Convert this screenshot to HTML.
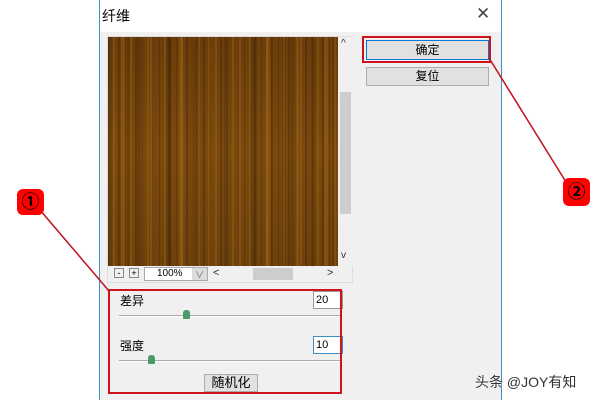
<!DOCTYPE html>
<html><head><meta charset="utf-8"><style>
*{margin:0;padding:0;box-sizing:border-box}
body{width:600px;height:400px;background:#fff;position:relative;overflow:hidden;font-family:"Liberation Sans","Noto Sans CJK SC",sans-serif;font-size:12px;color:#000}
.abs{position:absolute}
.dlg{left:99px;top:0;width:403px;height:400px;border-left:1px solid #3c8fc4;border-right:1px solid #3c8fc4;background:#f0f0f0}
.title{left:0;top:0;width:401px;height:32px;background:#fff}
.wood{left:108px;top:37px;width:230px;height:229px;
background:
repeating-linear-gradient(90deg,rgba(60,30,0,.3) 0 1px,transparent 1px 5px,rgba(190,120,30,.25) 5px 7px,transparent 7px 10px,rgba(40,20,0,.25) 10px 12px,transparent 12px 17px),
repeating-linear-gradient(90deg,rgba(0,0,0,.12) 0 4px,transparent 4px 13px,rgba(210,130,30,.2) 13px 17px,transparent 17px 29px),
repeating-linear-gradient(90deg,transparent 0 19px,rgba(50,25,0,.2) 19px 22px,transparent 22px 41px),
linear-gradient(180deg,#6a3d0a,#7a4a0e 50%,#6e420c);}
.btn{background:#e1e1e1;border:1px solid #adadad;text-align:center;font-size:12px}
</style></head><body>
<div class="abs dlg">
 <div class="abs title"></div>
 <div class="abs" style="left:2px;top:6px;font-size:14px">纤维</div>
 <div class="abs" style="left:376px;top:4px;font-size:17px;font-weight:100;color:#444;font-family:'DejaVu Sans',sans-serif">✕</div>
</div>
<div class="abs" style="left:107px;top:36px;width:246px;height:247px;border:1px solid #ddd;background:#f0f0f0"></div>
<div class="abs wood"></div>
<div class="abs" style="left:338px;top:37px;width:15px;height:229px;background:#f0f0f0"></div>
<div class="abs" style="left:340px;top:92px;width:11px;height:122px;background:#cdcdcd"></div>
<div class="abs" style="left:341px;top:38px;font-size:10px;color:#333">^</div>
<div class="abs" style="left:341px;top:250px;font-size:10px;color:#333">v</div>
<div class="abs" style="left:114px;top:268px;width:10px;height:10px;border:1px solid #888;font-size:9px;line-height:8px;text-align:center">-</div>
<div class="abs" style="left:129px;top:268px;width:10px;height:10px;border:1px solid #888;font-size:9px;line-height:8px;text-align:center">+</div>
<div class="abs" style="left:144px;top:267px;width:64px;height:14px;border:1px solid #aaa;background:#fff;font-size:10px;padding-left:12px;line-height:12px">100%</div>
<div class="abs" style="left:192px;top:268px;width:15px;height:12px;background:#ddd;font-size:9px;text-align:center;color:#666">∨</div>
<div class="abs" style="left:213px;top:267px;font-size:11px;color:#333">&lt;</div>
<div class="abs" style="left:253px;top:268px;width:40px;height:12px;background:#cdcdcd"></div>
<div class="abs" style="left:327px;top:267px;font-size:11px;color:#333">&gt;</div>
<div class="abs btn" style="left:366px;top:40px;width:123px;height:20px;border-color:#0078d7;line-height:18px">确定</div>
<div class="abs btn" style="left:366px;top:67px;width:123px;height:19px;line-height:17px">复位</div>
<div class="abs" style="left:362px;top:36px;width:129px;height:27px;border:2px solid #d0121b"></div>
<div class="abs" style="left:120px;top:292px">差异</div>
<div class="abs" style="left:313px;top:291px;width:30px;height:18px;border:1px solid #999;background:#fff;padding-left:2px;line-height:16px;font-size:11px">20</div>
<div class="abs" style="left:119px;top:315px;width:223px;height:2px;border-top:1px solid #aaa;border-bottom:1px solid #fff"></div>
<div class="abs" style="left:183px;top:310px;width:7px;height:9px;background:#4a9a6a;border-radius:3px 3px 1px 1px"></div>
<div class="abs" style="left:120px;top:337px">强度</div>
<div class="abs" style="left:313px;top:336px;width:30px;height:18px;border:1px solid #3c8fc4;background:#fff;padding-left:2px;line-height:16px;font-size:11px">10</div>
<div class="abs" style="left:119px;top:360px;width:223px;height:2px;border-top:1px solid #aaa;border-bottom:1px solid #fff"></div>
<div class="abs" style="left:148px;top:355px;width:7px;height:9px;background:#4a9a6a;border-radius:3px 3px 1px 1px"></div>
<div class="abs btn" style="left:204px;top:374px;width:54px;height:18px;line-height:16px;font-size:13px">随机化</div>
<div class="abs" style="left:108px;top:289px;width:234px;height:105px;border:2px solid #d0121b"></div>
<svg class="abs" style="left:0;top:0" width="600" height="400"><line x1="40" y1="210" x2="109" y2="291" stroke="#c0121b" stroke-width="1.5"/><line x1="489" y1="58" x2="566" y2="182" stroke="#c0121b" stroke-width="1.5"/></svg>
<div class="abs" style="left:17px;top:189px;width:27px;height:26px;background:#f00;border-radius:6px;text-align:center;line-height:26px;font-size:18px;font-weight:bold;color:#000">①</div>
<div class="abs" style="left:563px;top:178px;width:27px;height:28px;background:#f00;border-radius:6px;text-align:center;line-height:28px;font-size:18px;font-weight:bold;color:#000">②</div>
<div class="abs" style="left:475px;top:372px;font-size:14px;color:#333;text-shadow:0 0 2px #fff">头条 @JOY有知</div>
</body></html>
